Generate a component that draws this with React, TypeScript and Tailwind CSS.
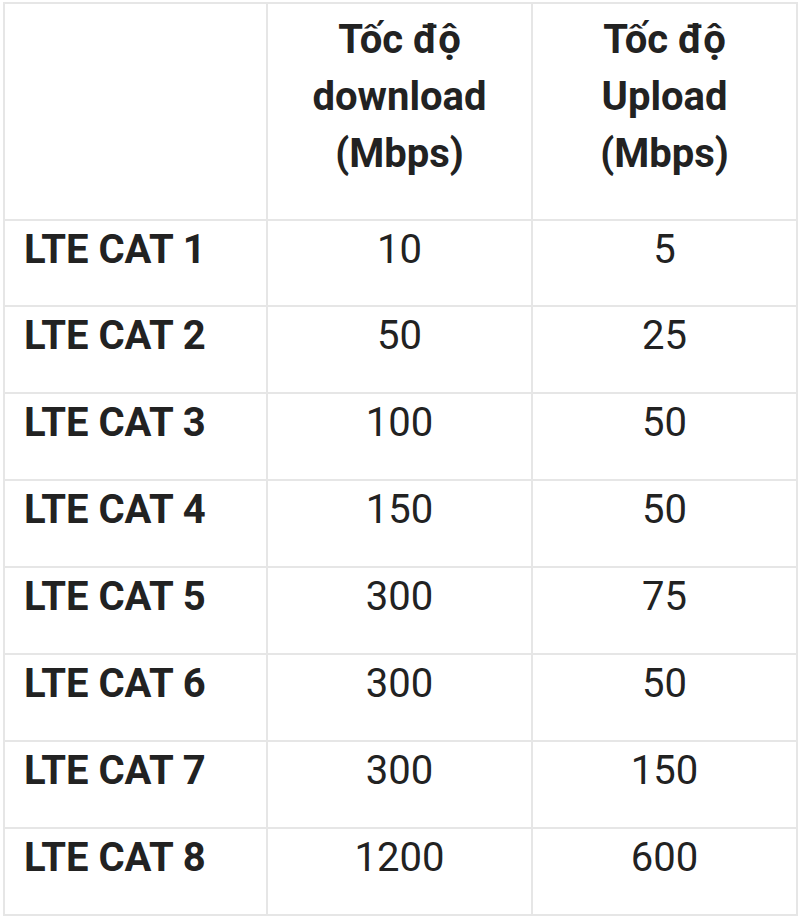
import React from "react";

const rows: [string, string, string][] = [
  ["LTE CAT 1", "10", "5"],
  ["LTE CAT 2", "50", "25"],
  ["LTE CAT 3", "100", "50"],
  ["LTE CAT 4", "150", "50"],
  ["LTE CAT 5", "300", "75"],
  ["LTE CAT 6", "300", "50"],
  ["LTE CAT 7", "300", "150"],
  ["LTE CAT 8", "1200", "600"],
];

export default function App() {
  return (
    <div className="w-[799px] h-[918px] bg-white pl-[3px] pt-[2px] font-['Roboto',sans-serif] text-[40px] leading-[57px] text-[#222222]">
      <div className="grid grid-cols-[263px_265px_265px] w-[795px] border-l-2 border-t-2 border-[#e6e6e6]">
        <div className="h-[217px] border-r-2 border-b-2 border-[#e6e6e6]"></div>
        <div className="h-[217px] border-r-2 border-b-2 border-[#e6e6e6] pt-[7px] text-center font-bold">
          Tốc độ
          <br />
          download
          <br />
          (Mbps)
        </div>
        <div className="h-[217px] border-r-2 border-b-2 border-[#e6e6e6] pt-[7px] text-center font-bold">
          Tốc độ
          <br />
          Upload
          <br />
          (Mbps)
        </div>
        {rows.map((r, i) => (
          <React.Fragment key={r[0]}>
            <div
              className={`${i === 0 ? "h-[86px]" : "h-[87px]"} border-r-2 border-b-2 border-[#e6e6e6] pl-[19px] font-bold`}
            >
              {r[0]}
            </div>
            <div
              className={`${i === 0 ? "h-[86px]" : "h-[87px]"} border-r-2 border-b-2 border-[#e6e6e6] text-center`}
            >
              {r[1]}
            </div>
            <div
              className={`${i === 0 ? "h-[86px]" : "h-[87px]"} border-r-2 border-b-2 border-[#e6e6e6] text-center`}
            >
              {r[2]}
            </div>
          </React.Fragment>
        ))}
      </div>
    </div>
  );
}
